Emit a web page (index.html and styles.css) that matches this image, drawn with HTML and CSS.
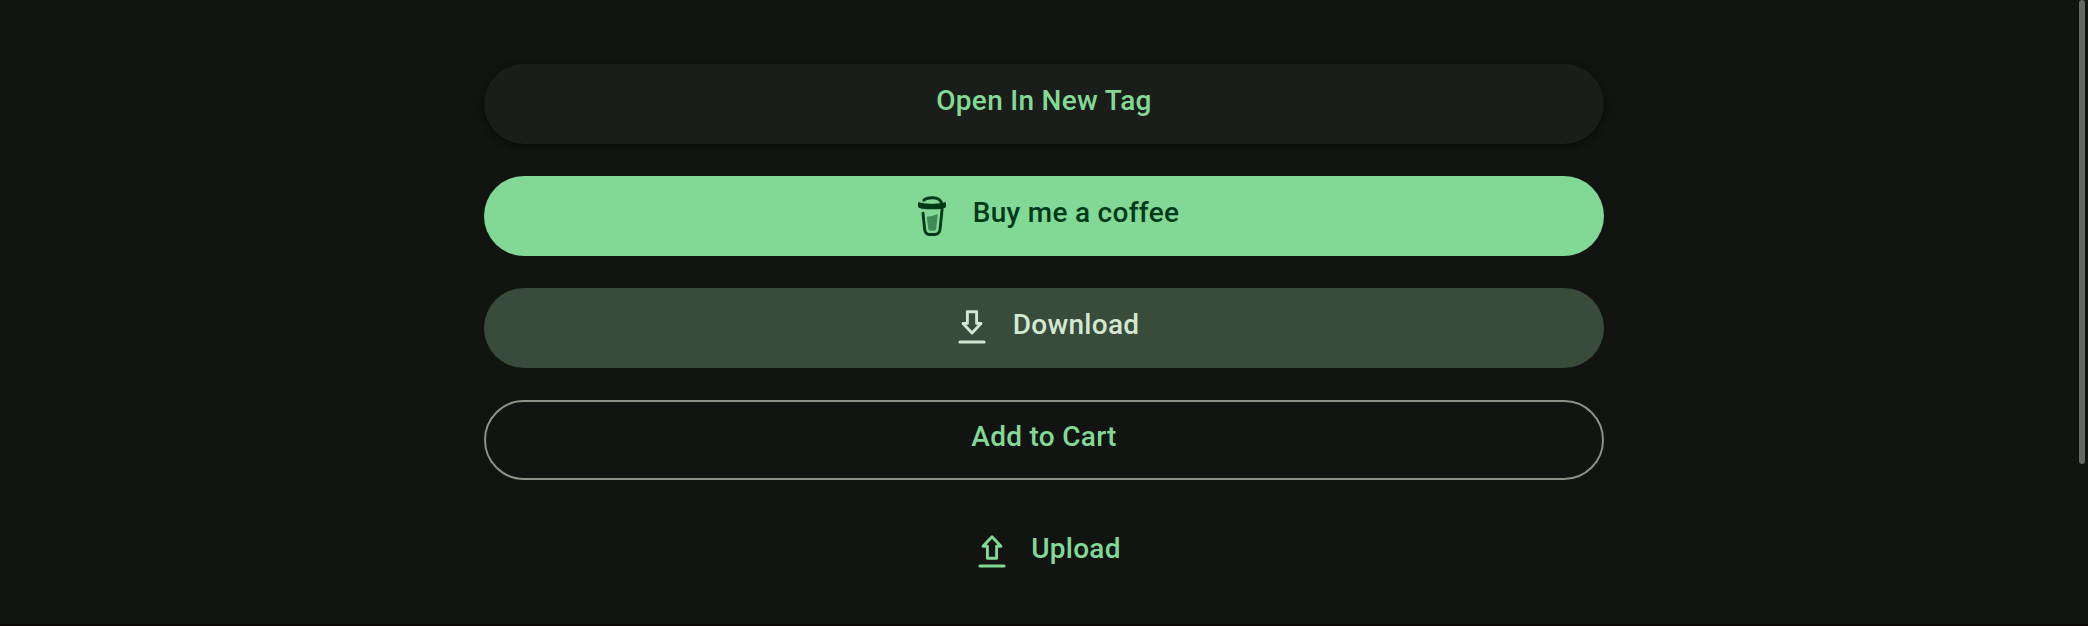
FILE: index.html
```html
<!DOCTYPE html>
<html lang="en">
<head>
<meta charset="utf-8">
<title>Buttons</title>
<link rel="stylesheet" href="styles.css">
</head>
<body>
<main class="stack">
  <button class="btn elevated"><span>Open In New Tag</span></button>
  <button class="btn filled with-icon">
    <svg class="icon" viewBox="0 0 36 44" fill="none" stroke="currentColor" stroke-width="2.9" stroke-linecap="round">
      <path d="M9.8 6.2C12 4.1 16 3.7 19.3 3.8C23 4 26 5.6 27.4 8.4"/>
      <path d="M5 8C9 10.3 27 10.3 31 8Q32 8 32 9.5V12.7Q31 15.3 18 15.3T4 12.7V9.5Q4 8 5 8Z" fill="currentColor" stroke="none"/>
      <path d="M9 19.2L10.6 35.2Q11.2 40.5 15.5 40.5H20.5Q25.5 40.5 26.1 35.2L28.1 15"/>
      <path d="M12.8 22.8Q18 22.5 23.8 20L22.2 35Q22 36.7 20 36.7H16.2Q14.5 36.7 14.3 35Z" fill="#428b59" stroke="none"/>
    </svg>
    <span>Buy me a coffee</span>
  </button>
  <button class="btn tonal with-icon">
    <svg class="icon" viewBox="0 0 36 44" fill="none" stroke="currentColor" stroke-width="2.9" stroke-linecap="round" stroke-linejoin="round">
      <path d="M13.4 5.7H22.6V17.4H27L18 27L9 17.4H13.4Z"/><path d="M6 36H30" stroke-width="3.1"/>
    </svg>
    <span>Download</span>
  </button>
  <button class="btn outlined"><span>Add to Cart</span></button>
  <button class="btn plain with-icon">
    <svg class="icon" viewBox="0 0 36 44" fill="none" stroke="currentColor" stroke-width="2.9" stroke-linecap="round" stroke-linejoin="round">
      <path d="M13.4 28.3H22.6V16.2H27L18 6.8L9 16.2H13.4Z"/><path d="M6 36H30" stroke-width="3.1"/>
    </svg>
    <span>Upload</span>
  </button>
</main>
<div class="scrollbar"></div>
</body>
</html>
```
FILE: styles.css
```css
* { box-sizing: border-box; }
body {
  margin: 0;
  height: 626px;
  overflow: hidden;
  background: #111411;
  border-bottom: 2px solid #0a0908;
  font-family: Roboto, sans-serif;
}
.stack {
  width: 1120px;
  margin: 0 auto;
  padding-top: 64px;
  display: flex;
  flex-direction: column;
  gap: 32px;
}
.btn {
  height: 80px;
  padding: 0 0 6px;
  border: 0;
  border-radius: 40px;
  display: flex;
  align-items: center;
  justify-content: center;
  gap: 23px;
  background: transparent;
  color: #82d996;
  font: 500 28px/40px Roboto, sans-serif;
  letter-spacing: 0.28px;
}
.with-icon { padding-left: 5px; }
.icon { width: 36px; height: 44px; margin-top: 6px; }
.plain .icon { margin-left: 1.5px; margin-right: -1.5px; }
.elevated { background: #1b1d1a; box-shadow: 0 2px 4px rgba(0,0,0,.3), 0 2px 6px 2px rgba(0,0,0,.15); }
.filled { background: #82d996; color: #00391a; }
.tonal { background: #394b3b; color: #d3e8d2; }
.outlined { border: 2px solid #8b9389; }
.scrollbar {
  position: absolute;
  top: 0;
  right: 3px;
  width: 6px;
  height: 464px;
  border-radius: 3px;
  background: #666;
}
```
